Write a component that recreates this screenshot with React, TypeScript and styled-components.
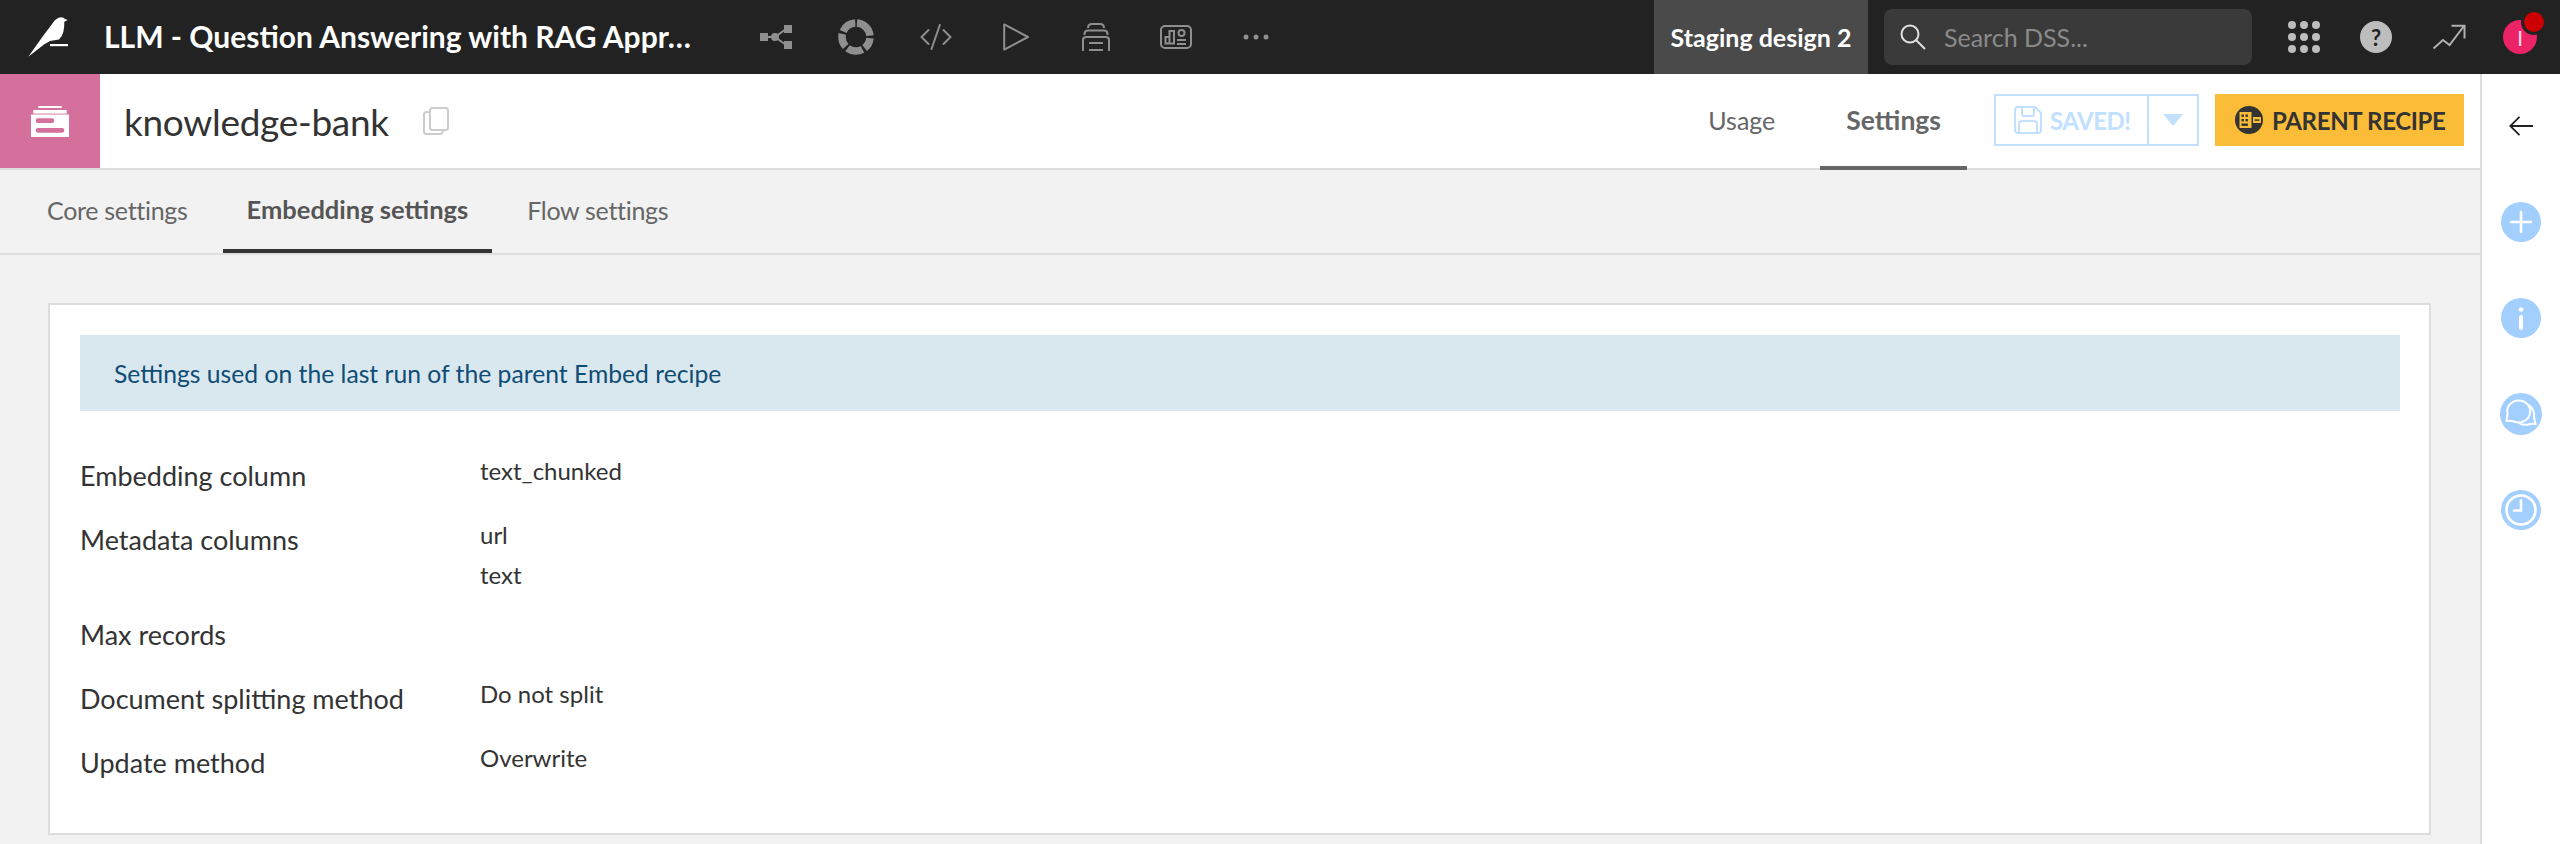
import React from "react";
import styled, { createGlobalStyle } from "styled-components";

const Global = createGlobalStyle`
  html, body { margin: 0; padding: 0; height: 100%; overflow: hidden; background: #f2f2f2; }
  #root { height: 844px; }
  * { box-sizing: border-box; }
  body { font-family: "Lato", "Open Sans", sans-serif; }
`;

const Page = styled.div`
  width: 2560px;
  height: 844px;
  display: flex;
  flex-direction: column;
  overflow: hidden;
`;

const TopBar = styled.header`
  height: 74px;
  flex: none;
  background: #222;
  display: flex;
  align-items: center;
  color: #fff;
`;
const Logo = styled.div`
  width: 104px;
  padding-left: 28px;
  flex: none;
  display: flex;
  align-items: center;
  svg { display: block; }
`;
const ProjectTitle = styled.div`
  width: 632px;
  flex: none;
  font-size: 30px;
  font-weight: 700;
  line-height: 34px;
  margin-top: -2px;
  white-space: nowrap;
`;
const NavIcons = styled.nav`
  display: flex;
  align-items: center;
`;
const NavIcon = styled.div`
  width: 80px;
  height: 74px;
  display: flex;
  align-items: center;
  justify-content: center;
  color: #8f8f8f;
  svg { display: block; }
`;
const TopRight = styled.div`
  margin-left: auto;
  display: flex;
  align-items: center;
  height: 74px;
`;
const Staging = styled.div`
  width: 214px;
  height: 74px;
  background: #4a4a4a;
  display: flex;
  align-items: center;
  justify-content: center;
  font-size: 25px;
  font-weight: 700;
  white-space: nowrap;
`;
const Search = styled.div`
  width: 368px;
  height: 56px;
  margin-left: 16px;
  background: #3a3a3a;
  border-radius: 8px;
  display: flex;
  align-items: center;
  padding-left: 16px;
  gap: 18px;
  color: #8a8a8a;
  font-size: 25px;
  svg { flex: none; }
`;
const TopTools = styled.div`
  display: flex;
  align-items: center;
  margin-left: 36px;
  margin-right: 23px;
  gap: 40px;
  svg { display: block; }
`;
const HelpBadge = styled.div`
  width: 32px;
  height: 32px;
  border-radius: 50%;
  background: #bdbdbd;
  color: #222;
  display: flex;
  align-items: center;
  justify-content: center;
  font-size: 22px;
  font-weight: 700;
`;
const Avatar = styled.div`
  position: relative;
  width: 34px;
  height: 34px;
  margin-left: -3px;
  border-radius: 50%;
  background: #ee2266;
  color: #ffd9e6;
  display: flex;
  align-items: center;
  justify-content: center;
  font-size: 22px;
`;
const Dot = styled.span`
  position: absolute;
  top: -11px;
  right: -10px;
  width: 26px;
  height: 26px;
  border-radius: 50%;
  background: #cc0000;
  border: 3px solid #222;
`;

const Body = styled.div`
  flex: 1;
  display: flex;
  min-height: 0;
`;
const Main = styled.main`
  flex: 1;
  display: flex;
  flex-direction: column;
  min-width: 0;
`;
const Side = styled.aside`
  width: 80px;
  flex: none;
  background: #fff;
  border-left: 2px solid #ddd;
  padding-top: 4px;
  display: flex;
  flex-direction: column;
`;
const SideCell = styled.div`
  height: 96px;
  display: flex;
  align-items: center;
  justify-content: center;
  svg { display: block; }
`;

const ItemHeader = styled.div`
  height: 96px;
  flex: none;
  background: #fff;
  border-bottom: 2px solid #ddd;
  display: flex;
  align-items: stretch;
  padding-right: 16px;
`;
const TypeBlock = styled.div`
  width: 100px;
  flex: none;
  background: #d5709d;
  display: flex;
  align-items: center;
  justify-content: center;
  svg { display: block; }
`;
const ItemName = styled.div`
  margin-left: 24px;
  display: flex;
  align-items: center;
  font-size: 37px;
  color: #333;
  letter-spacing: -0.3px;
  svg { margin-left: 34px; }
`;
const HeaderRight = styled.div`
  margin-left: auto;
  display: flex;
  align-items: stretch;
`;
const HeaderTab = styled.div<{ $active?: boolean }>`
  height: 96px;
  padding: 0 26px;
  margin-right: ${(p) => (p.$active ? "27px" : "19px")};
  display: flex;
  align-items: center;
  justify-content: center;
  font-size: ${(p) => (p.$active ? "26.5px" : "25px")};
  font-weight: ${(p) => (p.$active ? 700 : 400)};
  color: #666;
  border-bottom: 4px solid ${(p) => (p.$active ? "#666" : "transparent")};
`;
const SaveGroup = styled.div`
  align-self: center;
  margin-top: -2px;
  display: flex;
  width: 205px;
  height: 52px;
  border: 2px solid #c2e0ff;
`;
const SaveButton = styled.div`
  flex: 1;
  display: flex;
  align-items: center;
  padding-left: 18px;
  gap: 8px;
  font-size: 24px;
  font-weight: 700;
  letter-spacing: -0.5px;
  color: #c2e0ff;
  svg { flex: none; }
`;
const SaveCaret = styled.div`
  width: 50px;
  flex: none;
  border-left: 2px solid #c2e0ff;
  display: flex;
  align-items: center;
  justify-content: center;
`;
const ParentButton = styled.div`
  align-self: center;
  margin-top: -2px;
  margin-left: 16px;
  width: 249px;
  height: 52px;
  background: #fbbd38;
  color: #333;
  display: flex;
  align-items: center;
  padding-left: 20px;
  gap: 9px;
  font-size: 24px;
  font-weight: 700;
  letter-spacing: -0.35px;
  white-space: nowrap;
  svg { flex: none; }
`;

const SubTabs = styled.div`
  height: 85px;
  flex: none;
  background: #f2f2f2;
  border-bottom: 2px solid #ddd;
  display: flex;
  padding-left: 23px;
  gap: 11px;
`;
const SubTab = styled.div<{ $active?: boolean }>`
  height: 83px;
  padding: 0 24px ${(p) => (p.$active ? "2px" : "0")};
  display: flex;
  align-items: center;
  justify-content: center;
  font-size: ${(p) => (p.$active ? "25.5px" : "25px")};
  letter-spacing: ${(p) => (p.$active ? "0" : "-0.3px")};
  font-weight: ${(p) => (p.$active ? 700 : 400)};
  color: ${(p) => (p.$active ? "#555" : "#666")};
  border-bottom: 4px solid ${(p) => (p.$active ? "#333" : "transparent")};
`;

const Content = styled.div`
  flex: 1;
  padding: 48px 49px 0 48px;
  background: #f2f2f2;
`;
const Card = styled.section`
  background: #fff;
  border: 2px solid #ddd;
  padding: 30px 29px 38px 30px;
`;
const Alert = styled.div`
  height: 76px;
  background: #d9e7ef;
  color: #0f4d75;
  display: flex;
  align-items: center;
  padding-left: 34px;
  font-size: 24.7px;
  margin-bottom: 33px;
`;
const Row = styled.div`
  display: grid;
  grid-template-columns: 400px 1fr;
  min-height: 64px;
`;
const Label = styled.div`
  height: 64px;
  line-height: 64px;
  font-size: 27px;
  color: #333;
`;
const Values = styled.div<{ $multi?: boolean }>`
  padding: 7px 0 ${(p) => (p.$multi ? "8px" : "0")};
`;
const Value = styled.div`
  height: 40px;
  line-height: 40px;
  font-size: 24px;
  color: #333;
`;

const Bird = () => (
  <svg width="40" height="40" viewBox="0 0 40 40" fill="#fff">
    <path d="M0.3 39.7 L15 19 L25 5.7 Q28 1 33 0.3 Q36 0.5 37 2 L39.7 3 L36.3 4.8 Q36.5 11 35.3 15 Q34 20 31 22.5 L22 24 L16 27.5 Z" />
    <rect x="22" y="27" width="18" height="2.2" />
  </svg>
);

const Stack = () => (
  <svg width="38" height="31" viewBox="0 0 38 31" fill="#fff">
    <rect x="7.3" y="0" width="23.4" height="2" />
    <rect x="2.3" y="4" width="33.4" height="3.6" />
    <path fillRule="evenodd" d="M0 8.5H38V31H0Z M7 12.3A2.3 2.3 0 0 0 7 17H21A2.3 2.3 0 0 0 21 12.3Z M7 22A2.3 2.3 0 0 0 7 26.7H31A2.3 2.3 0 0 0 31 22Z" />
  </svg>
);

const FlowIcon = () => (
  <svg width="32" height="24" viewBox="0 0 32 24" fill="currentColor" stroke="none">
    <rect x="0" y="8" width="8" height="8" />
    <rect x="24" y="0" width="8" height="8" />
    <rect x="24" y="16" width="8" height="8" />
    <circle cx="15" cy="12" r="4" />
    <path d="M6 12H15L26 4M15 12L26 20" fill="none" stroke="currentColor" strokeWidth="2" />
  </svg>
);
const RingIcon = () => (
  <svg width="36" height="36" viewBox="0 0 36 36" fill="none">
    <circle
      cx="18"
      cy="18"
      r="14"
      stroke="currentColor"
      strokeWidth="7.5"
      strokeDasharray="19.5 2.5 11.5 2.5 15.8 2.5 13.5 2.5 15.3 2.5"
      transform="rotate(-86 18 18)"
    />
  </svg>
);
const CodeIcon = () => (
  <svg width="32" height="26" viewBox="0 0 32 26" fill="none" stroke="currentColor" strokeWidth="2" strokeLinecap="round" strokeLinejoin="round">
    <path d="M8.5 6 L1.5 13 L8.5 20" />
    <path d="M23.5 6 L30.5 13 L23.5 20" />
    <path d="M19.8 1 L11.5 25" />
  </svg>
);
const PlayIcon = () => (
  <svg width="26" height="28" viewBox="0 0 26 28" fill="none" stroke="currentColor" strokeWidth="2" strokeLinejoin="round">
    <path d="M1.2 1.4 L25 14 L1.2 26.6 Z" />
  </svg>
);
const BankIcon = () => (
  <svg width="28" height="28" viewBox="0 0 28 28" fill="none" stroke="currentColor" strokeWidth="2">
    <path d="M6 5 Q6 1 10 1 H18 Q22 1 22 5" />
    <path d="M2.5 12 V11 Q2.5 7.5 6 7.5 H22 Q25.5 7.5 25.5 11 V12" />
    <path d="M1 28 V17 Q1 14 4 14 H24 Q27 14 27 17 V28" />
    <path d="M7 20 H21 M7 27 H21" />
  </svg>
);
const DashIcon = () => (
  <svg width="32" height="24" viewBox="0 0 32 24" fill="none" stroke="currentColor" strokeWidth="2">
    <rect x="1" y="1" width="30" height="22" rx="4" />
    <path d="M5.5 18.5 V12 H9.5 V18.5 Z M9.5 18.5 H14 V6 H9.5 V12" />
    <circle cx="21.5" cy="8" r="3" />
    <path d="M17 15 H26 M17 19 H26" />
  </svg>
);
const MoreIcon = () => (
  <svg width="26" height="6" viewBox="0 0 26 6" fill="currentColor">
    <circle cx="3" cy="3" r="2.5" />
    <circle cx="13" cy="3" r="2.5" />
    <circle cx="23" cy="3" r="2.5" />
  </svg>
);
const SearchIcon = () => (
  <svg width="26" height="26" viewBox="0 0 26 26" fill="none" stroke="#e0e0e0" strokeWidth="2">
    <circle cx="10" cy="10" r="8.5" />
    <path d="M16 16 L25 25" />
  </svg>
);
const GridIcon = () => (
  <svg width="32" height="32" viewBox="0 0 32 32" fill="#bdbdbd">
    {[4, 16, 28].flatMap((y) => [4, 16, 28].map((x) => <circle key={`${x}-${y}`} cx={x} cy={y} r="4" />))}
  </svg>
);
const TrendIcon = () => (
  <svg width="34" height="26" viewBox="0 0 34 26" fill="none" stroke="#b0b0b0" strokeWidth="2">
    <path d="M1.5 24.5 L11 16 L17.5 21 L32 2" />
    <path d="M19.5 1.7 H32.5 V14.5" />
  </svg>
);
const CopyIcon = () => (
  <svg width="26" height="28" viewBox="0 0 26 28" fill="none" stroke="#ccc" strokeWidth="2">
    <rect x="7" y="1" width="18" height="22" rx="2.5" />
    <path d="M7 5 H3.5 Q1 5 1 7.5 V24.5 Q1 27 3.5 27 H17 Q20 27 20 23" />
  </svg>
);
const SaveIcon = () => (
  <svg width="28" height="28" viewBox="0 0 28 28" fill="none" stroke="#c2e0ff" strokeWidth="2">
    <path d="M4 1 H21 L27 7 V24 Q27 27 24 27 H4 Q1 27 1 24 V4 Q1 1 4 1 Z" />
    <path d="M8 1 V8 Q8 10 10 10 H18 Q20 10 20 8 V1" />
    <path d="M5 27 V18 Q5 15 8 15 H20 Q23 15 23 18 V27" />
  </svg>
);
const CaretIcon = () => (
  <svg width="20" height="12" viewBox="0 0 20 12" fill="#c2e0ff">
    <path d="M0 0 H20 L10 12 Z" />
  </svg>
);
const ParentIcon = () => (
  <svg width="28" height="28" viewBox="0 0 28 28">
    <circle cx="14" cy="14" r="14" fill="#333" />
    <rect x="4.5" y="6" width="12" height="16" fill="#fbbd38" />
    <g fill="#333">
      <rect x="6.5" y="8.5" width="2.4" height="2.4" />
      <rect x="10.5" y="8.5" width="2.4" height="2.4" />
      <rect x="6.5" y="13" width="2.4" height="2.4" />
      <rect x="10.5" y="13" width="2.4" height="2.4" />
      <rect x="6.5" y="17.5" width="6.4" height="2.4" />
    </g>
    <rect x="18" y="11" width="8" height="6" fill="#fbbd38" />
    <rect x="19.5" y="13.4" width="5" height="1.4" fill="#333" />
  </svg>
);

const SIDE = "#a3cfff";
const BackIcon = () => (
  <svg width="24" height="20" viewBox="0 0 24 20" fill="none" stroke="#222" strokeWidth="1.8">
    <path d="M24 10 H1.5 M10.5 0.8 L1.3 10 L10.5 19.2" />
  </svg>
);
const PlusIcon = () => (
  <svg width="40" height="40" viewBox="0 0 40 40">
    <circle cx="20" cy="20" r="20" fill={SIDE} />
    <path d="M20 10 V30 M10 20 H30" stroke="#fff" strokeWidth="2.6" strokeLinecap="round" />
  </svg>
);
const InfoIcon = () => (
  <svg width="40" height="40" viewBox="0 0 40 40">
    <circle cx="20" cy="20" r="20" fill={SIDE} />
    <circle cx="20" cy="11.5" r="2.3" fill="#fff" />
    <rect x="18" y="17" width="4" height="15" rx="2" fill="#fff" />
  </svg>
);
const ChatIcon = () => (
  <svg width="42" height="42" viewBox="0 0 42 42">
    <circle cx="21" cy="21" r="21" fill={SIDE} />
    <path d="M6.5 27 L7.5 21 A11.5 11 0 1 1 14 28.5 Q10 27.5 6.5 28 Z" fill="none" stroke="#fff" strokeWidth="2" strokeLinejoin="round" />
    <path d="M29 12 Q35 17 34 24 L35.5 31 Q31 30.5 28 31.5 Q23 32.5 20 30.5" fill="none" stroke="#fff" strokeWidth="2" strokeLinecap="round" />
  </svg>
);
const ClockIcon = () => (
  <svg width="40" height="40" viewBox="0 0 40 40">
    <circle cx="20" cy="20" r="20" fill={SIDE} />
    <circle cx="20" cy="20" r="14.5" fill="none" stroke="#fff" strokeWidth="2.6" />
    <path d="M20 10.5 V20.5 H13" fill="none" stroke="#fff" strokeWidth="2.6" strokeLinecap="round" />
  </svg>
);

const rows: { label: string; values: string[] }[] = [
  { label: "Embedding column", values: ["text_chunked"] },
  { label: "Metadata columns", values: ["url", "text"] },
  { label: "Max records", values: [] },
  { label: "Document splitting method", values: ["Do not split"] },
  { label: "Update method", values: ["Overwrite"] },
];

export default function App() {
  return (
    <Page>
      <Global />
      <TopBar>
        <Logo><Bird /></Logo>
        <ProjectTitle>LLM - Question Answering with RAG Appr…</ProjectTitle>
        <NavIcons>
          <NavIcon><FlowIcon /></NavIcon>
          <NavIcon><RingIcon /></NavIcon>
          <NavIcon><CodeIcon /></NavIcon>
          <NavIcon><PlayIcon /></NavIcon>
          <NavIcon><BankIcon /></NavIcon>
          <NavIcon><DashIcon /></NavIcon>
          <NavIcon><MoreIcon /></NavIcon>
        </NavIcons>
        <TopRight>
          <Staging>Staging design 2</Staging>
          <Search>
            <SearchIcon />
            <span>Search DSS...</span>
          </Search>
          <TopTools>
            <GridIcon />
            <HelpBadge>?</HelpBadge>
            <TrendIcon />
            <Avatar>I<Dot /></Avatar>
          </TopTools>
        </TopRight>
      </TopBar>
      <Body>
        <Main>
          <ItemHeader>
            <TypeBlock><Stack /></TypeBlock>
            <ItemName>knowledge-bank<CopyIcon /></ItemName>
            <HeaderRight>
              <HeaderTab>Usage</HeaderTab>
              <HeaderTab $active>Settings</HeaderTab>
              <SaveGroup>
                <SaveButton><SaveIcon />SAVED!</SaveButton>
                <SaveCaret><CaretIcon /></SaveCaret>
              </SaveGroup>
              <ParentButton><ParentIcon />PARENT RECIPE</ParentButton>
            </HeaderRight>
          </ItemHeader>
          <SubTabs>
            <SubTab>Core settings</SubTab>
            <SubTab $active>Embedding settings</SubTab>
            <SubTab>Flow settings</SubTab>
          </SubTabs>
          <Content>
            <Card>
              <Alert>Settings used on the last run of the parent Embed recipe</Alert>
              {rows.map((r) => (
                <Row key={r.label}>
                  <Label>{r.label}</Label>
                  <Values $multi={r.values.length > 1}>
                    {r.values.map((v) => <Value key={v}>{v}</Value>)}
                  </Values>
                </Row>
              ))}
            </Card>
          </Content>
        </Main>
        <Side>
          <SideCell><BackIcon /></SideCell>
          <SideCell><PlusIcon /></SideCell>
          <SideCell><InfoIcon /></SideCell>
          <SideCell><ChatIcon /></SideCell>
          <SideCell><ClockIcon /></SideCell>
        </Side>
      </Body>
    </Page>
  );
}
